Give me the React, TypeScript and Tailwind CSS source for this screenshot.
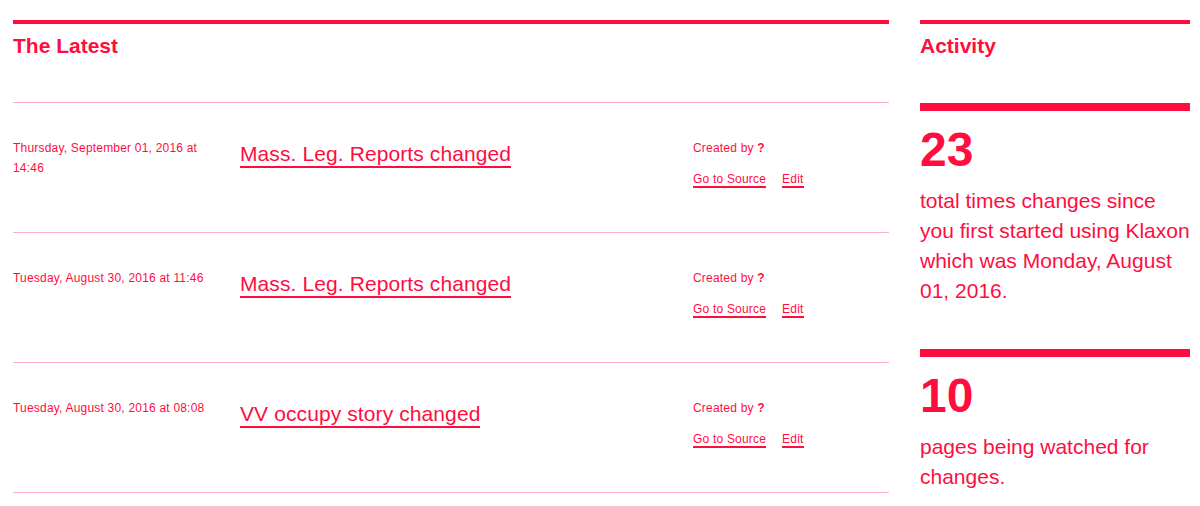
import React from 'react';

const RED = 'text-[#ff0d3f]';

const changes = [
  { date: 'Thursday, September 01, 2016 at 14:46', title: 'Mass. Leg. Reports changed' },
  { date: 'Tuesday, August 30, 2016 at 11:46', title: 'Mass. Leg. Reports changed' },
  { date: 'Tuesday, August 30, 2016 at 08:08', title: 'VV occupy story changed' },
];

function ChangeRow({ date, title }: { date: string; title: string }) {
  return (
    <div className="grid h-[130px] grid-cols-[227px_453px_1fr] border-b border-[#ffb0c0] pt-[35px] first:h-[131px]">
      <div className="w-[205px] text-[12px] leading-[20px] tracking-[0.2px]">{date}</div>
      <div className="pt-[4px]">
        <a href="#" className="inline-block border-b-2 border-[#ff0d3f] text-[21px] leading-[24px] tracking-[0.1px]">
          {title}
        </a>
      </div>
      <div className="text-[12px] tracking-[0.2px]">
        <div className="leading-[20px]">
          Created by <span className="font-bold">?</span>
        </div>
        <div className="mt-[15px] flex gap-4">
          <a href="#" className="inline-block border-b-2 border-[#ff0d3f] leading-[13px]">Go to Source</a>
          <a href="#" className="inline-block border-b-2 border-[#ff0d3f] leading-[13px]">Edit</a>
        </div>
      </div>
    </div>
  );
}

function Stat({ value, children }: { value: number; children: React.ReactNode }) {
  return (
    <div>
      <div className="h-[8px] bg-[#ff0d3f]" />
      <div className="mt-[15px] text-[48px] font-bold leading-[48px]">{value}</div>
      <p className="mt-[12px] text-[21px] leading-[30px]">{children}</p>
    </div>
  );
}

export default function App() {
  return (
    <div
      className={`flex min-h-[506px] gap-[31px] bg-white pl-[13px] pr-[10px] pt-[20px] ${RED}`}
      style={{ fontFamily: '"Liberation Sans", Arial, sans-serif' }}
    >
      <section className="flex-1">
        <div className="h-[83px] border-t-4 border-b border-t-[#ff0d3f] border-b-[#ffb0c0] pt-[8px]">
          <h2 className="text-[21px] font-bold leading-[28px]">The Latest</h2>
        </div>
        {changes.map((c, i) => (
          <ChangeRow key={i} date={c.date} title={c.title} />
        ))}
      </section>

      <aside className="w-[270px]">
        <div className="h-[83px] border-t-4 border-[#ff0d3f] pt-[8px]">
          <h2 className="text-[21px] font-bold leading-[28px]">Activity</h2>
        </div>
        <Stat value={23}>
          total times changes since you first started using Klaxon which was Monday, August 01, 2016.
        </Stat>
        <div className="mt-[43px]">
          <Stat value={10}>pages being watched for changes.</Stat>
        </div>
      </aside>
    </div>
  );
}
